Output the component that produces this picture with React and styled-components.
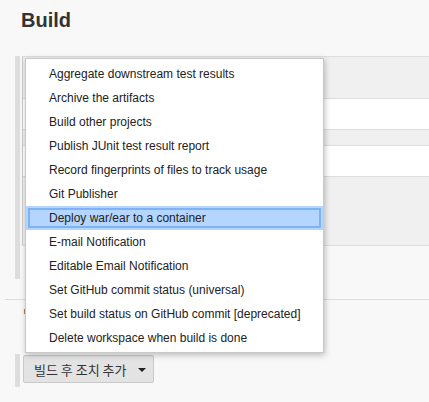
import React from 'react';
import styled, { createGlobalStyle } from 'styled-components';

const Global = createGlobalStyle`
  html, body { margin: 0; padding: 0; background: #f8f8f8; overflow: hidden; }
  body { font-family: "Liberation Sans", Arial, sans-serif; }
`;

const Page = styled.div`
  width: 429px;
  height: 402px;
  overflow: hidden;
`;

const Title = styled.h1`
  margin: 0;
  padding: 8px 0 0 21px;
  font-size: 20px;
  line-height: 24px;
  font-weight: bold;
  color: #333;
`;

const Section = styled.div`
  margin: 24px 0 0 15px;
  border-left: 5px solid #ddd;
  padding-left: 2px;
  height: 223px;
  box-sizing: border-box;
`;

const Panel = styled.div`
  display: flex;
  flex-direction: column;
  height: 190px;
  box-sizing: border-box;
  border-top: 1px solid #ddd;
  border-bottom: 1px solid #ddd;
  border-left: 1px solid #ccc;
  background: #f0f0f0;
`;

const Band = styled.div`
  height: 41px;
  flex: none;
`;

const FieldRow = styled.div`
  height: 32px;
  flex: none;
  box-sizing: border-box;
  border-top: 1px solid #ddd;
  border-bottom: 1px solid #ddd;
  background: #fff;
  margin-bottom: ${(p) => p.$gap || 0}px;
`;

const Filler = styled.div`
  flex: 1;
`;

const Divider = styled.div`
  margin: 20px 0 0 5px;
  border-top: 1px solid #ddd;
`;

const SubTitle = styled.div`
  padding: 4px 0 0 23px;
  font-family: "Noto Sans CJK KR", "Liberation Sans", sans-serif;
  font-size: 13px;
  line-height: 20px;
  font-weight: normal;
  color: #6b5a3a;
`;

const ActionBar = styled.div`
  margin: 30px 0 0 15px;
  border-left: 5px solid #ddd;
  padding: 1px 0 4px 3px;
`;

const ButtonWrap = styled.div`
  position: relative;
  display: inline-block;
  vertical-align: top;
`;

const AddButton = styled.button`
  display: flex;
  align-items: center;
  justify-content: space-between;
  width: 131px;
  height: 28px;
  box-sizing: border-box;
  padding: 0 7px 0 10px;
  background: #e3e3e3;
  border: 1px solid #c9c9c9;
  border-radius: 2px;
  font-family: "Noto Sans CJK KR", "Liberation Sans", sans-serif;
  font-size: 13px;
  color: #333;
  cursor: pointer;
`;

const Caret = styled.span`
  width: 0;
  height: 0;
  border-left: 4px solid transparent;
  border-right: 4px solid transparent;
  border-top: 4px solid #222;
  margin-top: 1px;
`;

const Menu = styled.ul`
  position: absolute;
  left: 2px;
  bottom: calc(100% + 2px);
  width: 299px;
  box-sizing: border-box;
  margin: 0;
  padding: 3px 0 2px;
  list-style: none;
  background: #fff;
  border: 1px solid #c8c8c8;
  box-shadow: 1px 2px 6px rgba(0, 0, 0, 0.25);
  z-index: 10;
`;

const Item = styled.li`
  height: 24px;
  line-height: 24px;
  padding-left: 23px;
  font-size: 12px;
  color: #222;
  white-space: nowrap;
  background: ${(p) => (p.$active ? '#b4d5fe' : 'transparent')};
  box-shadow: ${(p) => (p.$active ? 'inset 0 0 0 2px #b4d5fe, inset 0 0 0 4px #7fb1f7' : 'none')};
`;

const items = [
  'Aggregate downstream test results',
  'Archive the artifacts',
  'Build other projects',
  'Publish JUnit test result report',
  'Record fingerprints of files to track usage',
  'Git Publisher',
  'Deploy war/ear to a container',
  'E-mail Notification',
  'Editable Email Notification',
  'Set GitHub commit status (universal)',
  'Set build status on GitHub commit [deprecated]',
  'Delete workspace when build is done',
];

export default function App() {
  return (
    <Page>
      <Global />
      <Title>Build</Title>
      <Section>
        <Panel>
          <Band />
          <FieldRow $gap={15} />
          <FieldRow />
          <Filler />
        </Panel>
      </Section>
      <Divider />
      <SubTitle>빌드 후 조치</SubTitle>
      <ActionBar>
        <ButtonWrap>
          <Menu>
            {items.map((t) => (
              <Item key={t} $active={t === 'Deploy war/ear to a container'}>
                {t}
              </Item>
            ))}
          </Menu>
          <AddButton>
            <span>빌드 후 조치 추가</span>
            <Caret />
          </AddButton>
        </ButtonWrap>
      </ActionBar>
    </Page>
  );
}
